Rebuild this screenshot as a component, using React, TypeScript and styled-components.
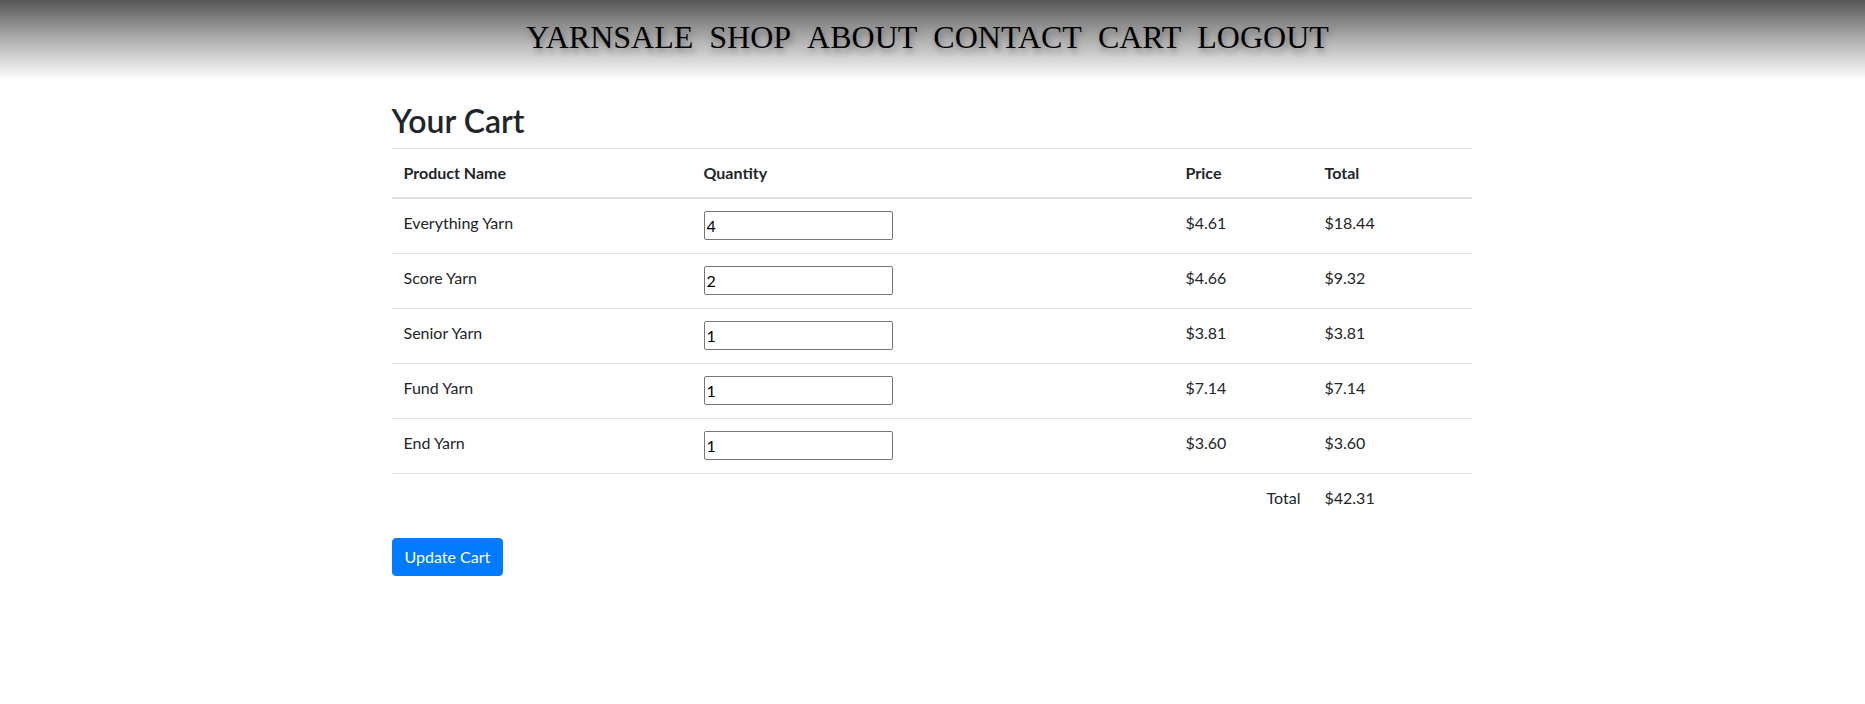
import React from "react";
import styled, { createGlobalStyle } from "styled-components";

const GlobalStyle = createGlobalStyle`
  html, body {
    margin: 0;
    padding: 0;
    background: #ffffff;
  }
  body {
    font-family: Lato, "Noto Sans", sans-serif;
    font-size: 16px;
    line-height: 1.5;
    color: #212529;
  }
  * { box-sizing: border-box; }
`;

const Header = styled.header`
  height: 80px;
  padding: 0 10px 4px 0;
  background: linear-gradient(to bottom, #555555 0%, #a8a8a8 45%, #ffffff 100%);
  display: flex;
  align-items: center;
  justify-content: center;
`;

const Nav = styled.nav`
  display: flex;
  gap: 16px;
  font-family: "Liberation Serif", "Times New Roman", serif;
  font-size: 32px;
  line-height: 1.1;
`;

const NavLink = styled.a`
  color: #000000;
  text-decoration: none;
  text-shadow: 2px 4px 6px rgba(0, 0, 0, 0.35);
`;

const Main = styled.main`
  width: 1080px;
  margin: 0 0 0 calc(50% - 541px);
  padding-top: 22px;
`;

const Title = styled.h2`
  margin: 0 0 8px;
  font-size: 32px;
  font-weight: 600;
  line-height: 1.2;
  color: #212529;
`;

const Table = styled.table`
  width: 100%;
  border-collapse: collapse;
  margin-bottom: 16px;
  table-layout: fixed;
`;

const HeadCell = styled.th<{ $w: number }>`
  width: ${(p) => p.$w}px;
  text-align: left;
  font-weight: 700;
  padding: 12px;
  vertical-align: bottom;
  border-top: 1px solid #dee2e6;
  border-bottom: 2px solid #dee2e6;
`;

const Cell = styled.td<{ $align?: string }>`
  padding: 12px;
  vertical-align: top;
  border-top: 1px solid #dee2e6;
  text-align: ${(p) => p.$align || "left"};
`;

const QtyInput = styled.input`
  display: block;
  width: 189px;
  height: 29px;
  margin: 0 0 1px;
  padding: 1px 2px;
  border: 1px solid #767676;
  border-radius: 2px;
  font-family: inherit;
  font-size: 16px;
  line-height: 24px;
  color: #000;
  background: #fff;
`;

const Button = styled.button`
  display: inline-block;
  font-family: inherit;
  font-size: 16px;
  line-height: 24px;
  padding: 6px 12px;
  color: #ffffff;
  background: #007bff;
  border: 1px solid #007bff;
  border-radius: 4px;
  cursor: pointer;
`;

const items = [
  { name: "Everything Yarn", qty: 4, price: "$4.61", total: "$18.44" },
  { name: "Score Yarn", qty: 2, price: "$4.66", total: "$9.32" },
  { name: "Senior Yarn", qty: 1, price: "$3.81", total: "$3.81" },
  { name: "Fund Yarn", qty: 1, price: "$7.14", total: "$7.14" },
  { name: "End Yarn", qty: 1, price: "$3.60", total: "$3.60" },
];

export default function App() {
  return (
    <>
      <GlobalStyle />
      <Header>
        <Nav>
          {["YARNSALE", "SHOP", "ABOUT", "CONTACT", "CART", "LOGOUT"].map((l) => (
            <NavLink key={l} href="#">
              {l}
            </NavLink>
          ))}
        </Nav>
      </Header>
      <Main>
        <Title>Your Cart</Title>
        <Table>
          <thead>
            <tr>
              <HeadCell $w={300}>Product Name</HeadCell>
              <HeadCell $w={482}>Quantity</HeadCell>
              <HeadCell $w={139}>Price</HeadCell>
              <HeadCell $w={159}>Total</HeadCell>
            </tr>
          </thead>
          <tbody>
            {items.map((it) => (
              <tr key={it.name}>
                <Cell>{it.name}</Cell>
                <Cell>
                  <QtyInput type="text" defaultValue={String(it.qty)} />
                </Cell>
                <Cell>{it.price}</Cell>
                <Cell>{it.total}</Cell>
              </tr>
            ))}
          </tbody>
          <tfoot>
            <tr>
              <Cell />
              <Cell />
              <Cell $align="right">Total</Cell>
              <Cell>$42.31</Cell>
            </tr>
          </tfoot>
        </Table>
        <Button type="button">Update Cart</Button>
      </Main>
    </>
  );
}
